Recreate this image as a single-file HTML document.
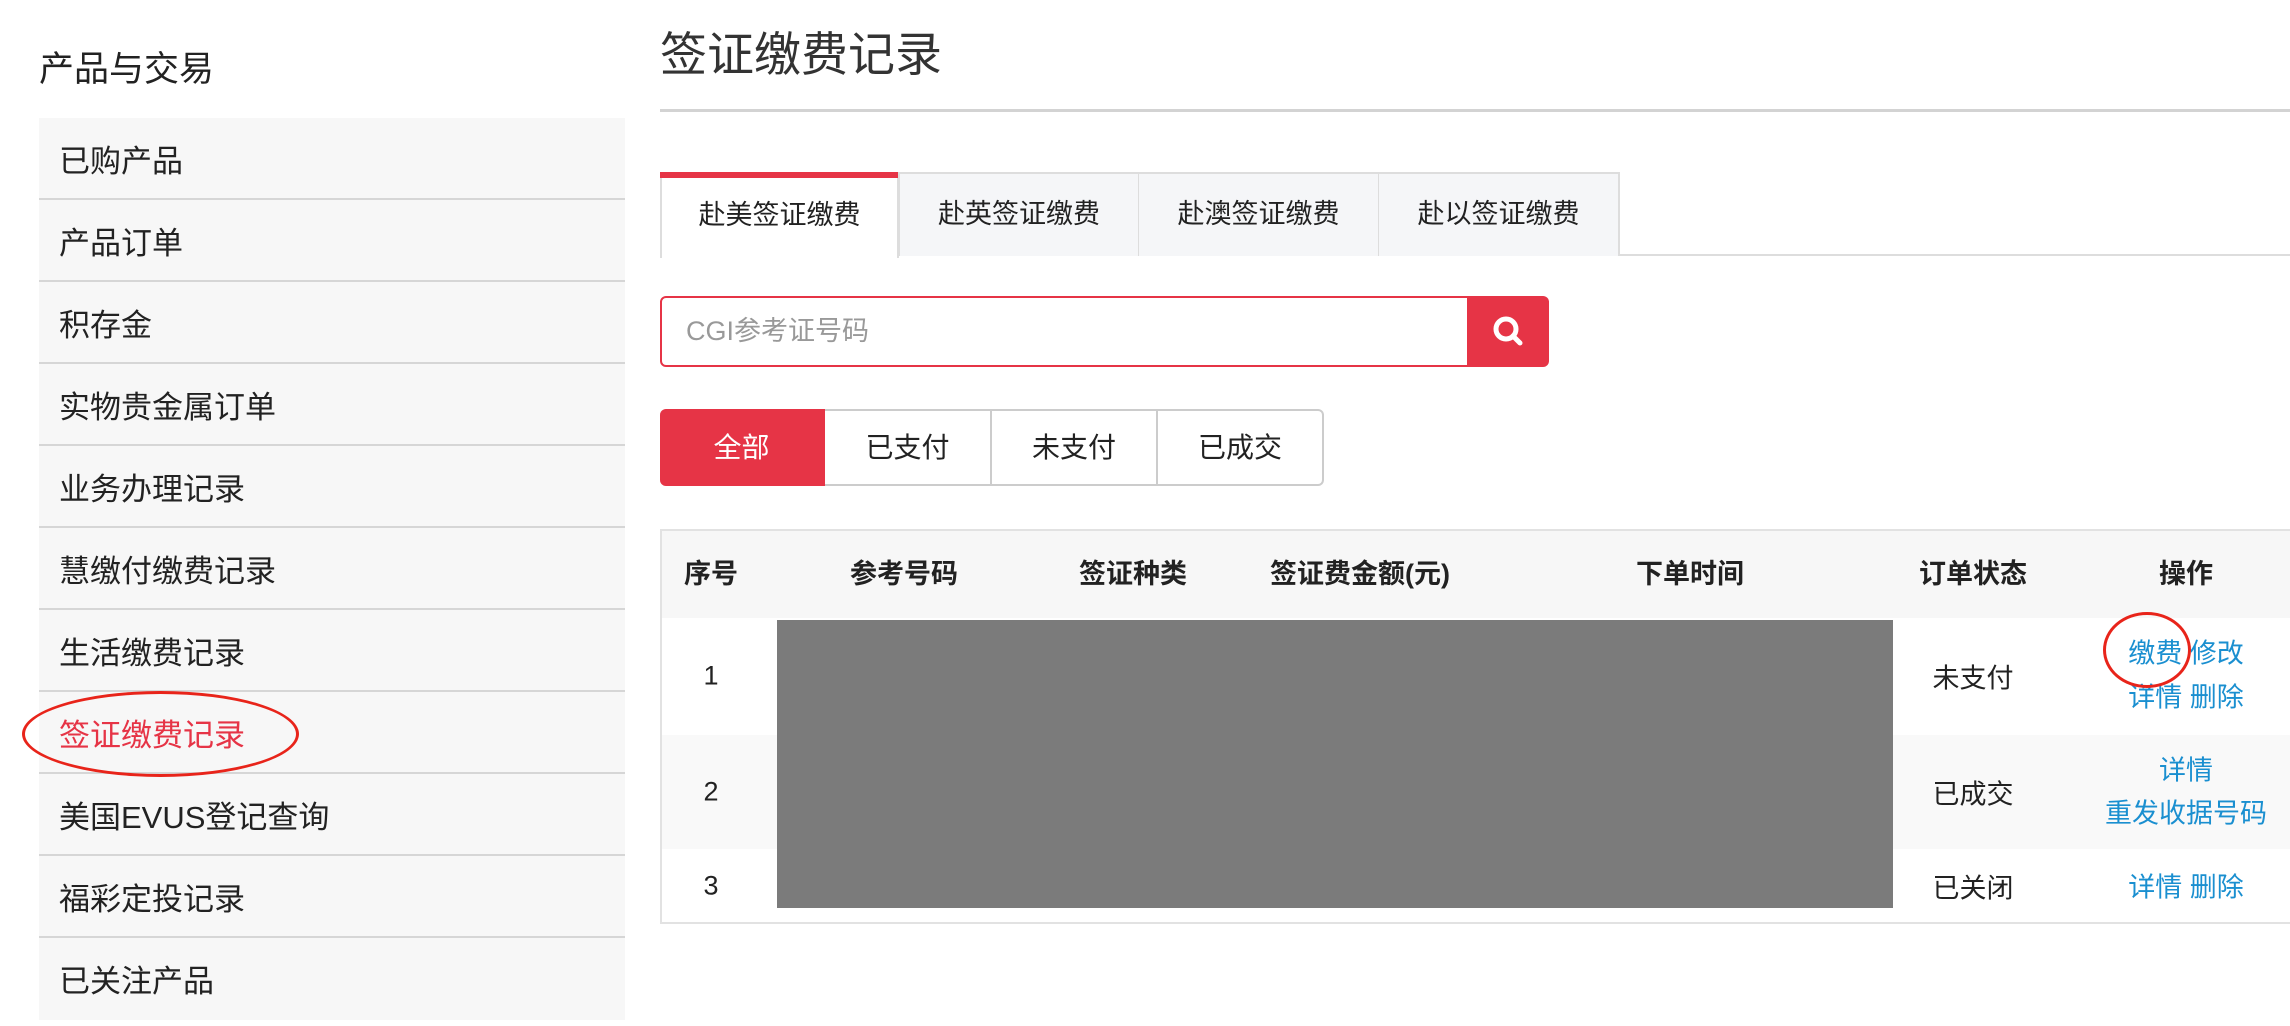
<!DOCTYPE html>
<html><head><meta charset="utf-8"><style>
*{margin:0;padding:0;box-sizing:border-box}
body{width:2290px;height:1026px;background:#fff;font-family:"Liberation Sans","Noto Sans CJK SC",sans-serif;color:#222;position:relative;overflow:hidden}
.a{position:absolute}
.side{left:39px;width:586px;top:118px}
.side div{height:82px;background:#f7f7f7;border-bottom:2px solid #d6d6d6;font-size:31px;line-height:80px;padding-left:20px;padding-top:4px;overflow:hidden}
.tab{top:172px;height:84px;font-size:27px;line-height:80px;text-align:center;background:#f5f6f8;border:2px solid #ddd;border-bottom:none}
.fb{top:409px;height:77px;font-size:28px;line-height:73px;text-align:center;border:2px solid #ccc;border-left:none;background:#fff}
.th{top:530px;height:88px;line-height:88px;font-size:27px;font-weight:bold;text-align:center;transform:translateX(-50%);white-space:nowrap}
.td{font-size:27px;text-align:center;transform:translate(-50%,-50%);white-space:nowrap}
.lk{color:#1a8fd0}
</style></head><body>
<div class="a" style="left:39px;top:48px;font-size:35px;line-height:44px">产品与交易</div>
<div class="a side">
<div>已购产品</div><div>产品订单</div><div>积存金</div><div>实物贵金属订单</div><div>业务办理记录</div><div>慧缴付缴费记录</div><div>生活缴费记录</div><div style="color:#e63446">签证缴费记录</div><div>美国EVUS登记查询</div><div>福彩定投记录</div><div style="border-bottom:none">已关注产品</div>
</div>
<div class="a" style="left:22px;top:691px;width:277px;height:86px;border:3px solid #e8241a;border-radius:50%"></div>

<div class="a" style="left:660px;top:26px;font-size:47px;line-height:58px;color:#333">签证缴费记录</div>
<div class="a" style="left:660px;top:109px;width:1630px;height:3px;background:#d3d3d3"></div>

<div class="a" style="left:660px;top:254px;width:1630px;height:2px;background:#ddd"></div>
<div class="a tab" style="left:660px;width:239px;background:#fff;border-top:none;border-left:2px solid #ddd;height:86px"><div style="height:6px;background:#e63446;margin:0 -2px 0 -2px"></div><div style="line-height:74px">赴美签证缴费</div></div>
<div class="a tab" style="left:898px;width:242px">赴英签证缴费</div>
<div class="a tab" style="left:1139px;width:241px;border-left:none">赴澳签证缴费</div>
<div class="a tab" style="left:1379px;width:241px;border-left:none">赴以签证缴费</div>

<div class="a" style="left:660px;top:296px;width:810px;height:71px;border:2px solid #e63446;border-radius:6px 0 0 6px;font-size:27px;line-height:67px;padding-left:24px;color:#999">CGI参考证号码</div>
<div class="a" style="left:1467px;top:296px;width:82px;height:71px;background:#e63446;border-radius:0 6px 6px 0">
<svg width="82" height="71" viewBox="0 0 82 71"><circle cx="39" cy="33" r="10" fill="none" stroke="#fff" stroke-width="5"/><line x1="46" y1="40" x2="53" y2="47" stroke="#fff" stroke-width="5" stroke-linecap="round"/></svg></div>

<div class="a fb" style="left:660px;width:165px;background:#e63446;color:#fff;border-color:#e63446;border-radius:6px 0 0 6px">全部</div>
<div class="a fb" style="left:825px;width:167px">已支付</div>
<div class="a fb" style="left:992px;width:166px">未支付</div>
<div class="a fb" style="left:1158px;width:166px;border-radius:0 6px 6px 0">已成交</div>

<div class="a" style="left:660px;top:529px;width:1630px;height:395px;border:2px solid #e2e2e2;border-right:none"></div>
<div class="a" style="left:662px;top:531px;width:1628px;height:87px;background:#f7f7f7"></div>
<div class="a" style="left:662px;top:735px;width:1628px;height:114px;background:#f9f9f9"></div>
<div class="a th" style="left:711px">序号</div>
<div class="a th" style="left:904px">参考号码</div>
<div class="a th" style="left:1133px">签证种类</div>
<div class="a th" style="left:1360px">签证费金额(元)</div>
<div class="a th" style="left:1690px">下单时间</div>
<div class="a th" style="left:1973px">订单状态</div>
<div class="a th" style="left:2186px">操作</div>
<div class="a" style="left:777px;top:620px;width:1116px;height:288px;background:#7b7b7b"></div>
<div class="a td" style="left:711px;top:676px">1</div>
<div class="a td" style="left:711px;top:792px">2</div>
<div class="a td" style="left:711px;top:886px">3</div>
<div class="a td" style="left:1973px;top:676px">未支付</div>
<div class="a td" style="left:1973px;top:792px">已成交</div>
<div class="a td" style="left:1973px;top:886px">已关闭</div>
<div class="a td lk" style="left:2186px;top:651px">缴费 修改</div>
<div class="a td lk" style="left:2186px;top:695px">详情 删除</div>
<div class="a td lk" style="left:2186px;top:768px">详情</div>
<div class="a td lk" style="left:2186px;top:811px">重发收据号码</div>
<div class="a td lk" style="left:2186px;top:885px">详情 删除</div>
<div class="a" style="left:2103px;top:612px;width:88px;height:76px;border:3px solid #e8241a;border-radius:50%"></div>
</body></html>
